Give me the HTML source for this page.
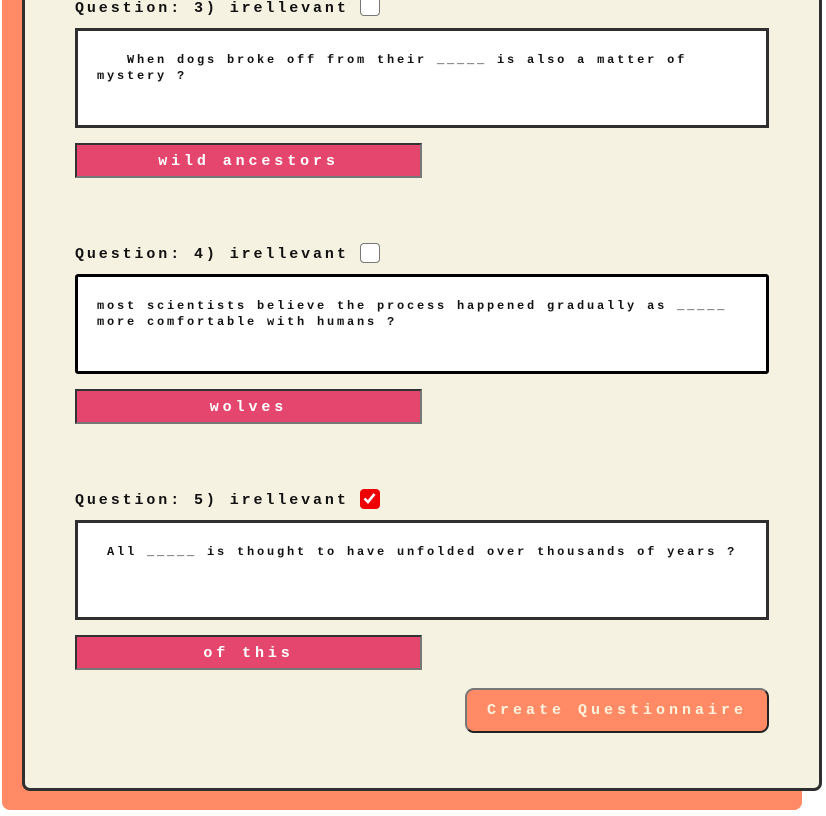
<!DOCTYPE html>
<html><head><style>
*{box-sizing:border-box;margin:0;padding:0}
body{width:826px;height:816px;background:#fff;position:relative;overflow:hidden;font-family:"Liberation Mono",monospace}
.orange{position:absolute;left:2px;top:-20px;width:800px;height:830px;background:#ff8a65;border-radius:0 0 8px 8px}
.card{position:absolute;left:22px;top:-20px;width:800px;height:811px;background:#f6f2e2;border:3px solid #2f2f2f;border-radius:0 0 8px 8px}
.lbl{position:absolute;left:75px;font-size:15px;font-weight:bold;letter-spacing:2.9px;color:#111;white-space:pre;line-height:16px}
.cb{position:absolute;left:360px;width:20px;height:20px;border:1.5px solid #777;border-radius:4px;background:#fff}
.cb.on{background:#e00;border-color:#e00}
.ta{position:absolute;left:75px;width:694px;height:100px;background:#fff;border:3px solid #2f2f2f;padding:21px 19px;font-size:12px;font-weight:bold;letter-spacing:2.8px;line-height:16px;white-space:pre-wrap;color:#111}
.ta.f{border-color:#000;border-radius:3px}
.btn{position:absolute;left:75px;width:347px;height:35px;background:#e5466d;border:2px solid;border-color:#333 #777 #777 #333;color:#fff;font-size:15px;font-weight:bold;letter-spacing:3.9px;text-align:center;line-height:34px}
.create{position:absolute;left:465px;top:688px;width:304px;height:45px;background:#ff8a65;border:2px solid;border-color:#777 #222 #222 #777;border-radius:9px;color:#fdf3dc;font-size:15px;font-weight:bold;letter-spacing:4px;text-align:center;line-height:42px}
</style></head><body>
<div class="orange"></div>
<div class="card"></div>

<div class="lbl" style="top:1px">Question: 3) irellevant</div>
<div class="cb" style="top:-4px"></div>
<div class="ta" style="top:28px">   When dogs broke off from their _____ is also a matter of mystery ?</div>
<div class="btn" style="top:143px">wild ancestors</div>

<div class="lbl" style="top:247px">Question: 4) irellevant</div>
<div class="cb" style="top:243px"></div>
<div class="ta f" style="top:274px">most scientists believe the process happened gradually as _____ more comfortable with humans ?</div>
<div class="btn" style="top:389px">wolves</div>

<div class="lbl" style="top:493px">Question: 5) irellevant</div>
<div class="cb on" style="top:489px"><svg width="17" height="17" viewBox="0 0 17 17" style="position:absolute;left:0;top:0"><path d="M3.5 8.5 L7 12 L13.5 4" stroke="#fff" stroke-width="2.6" fill="none"/></svg></div>
<div class="ta" style="top:520px"> All _____ is thought to have unfolded over thousands of years ?</div>
<div class="btn" style="top:635px">of this</div>

<div class="create">Create Questionnaire</div>
</body></html>
